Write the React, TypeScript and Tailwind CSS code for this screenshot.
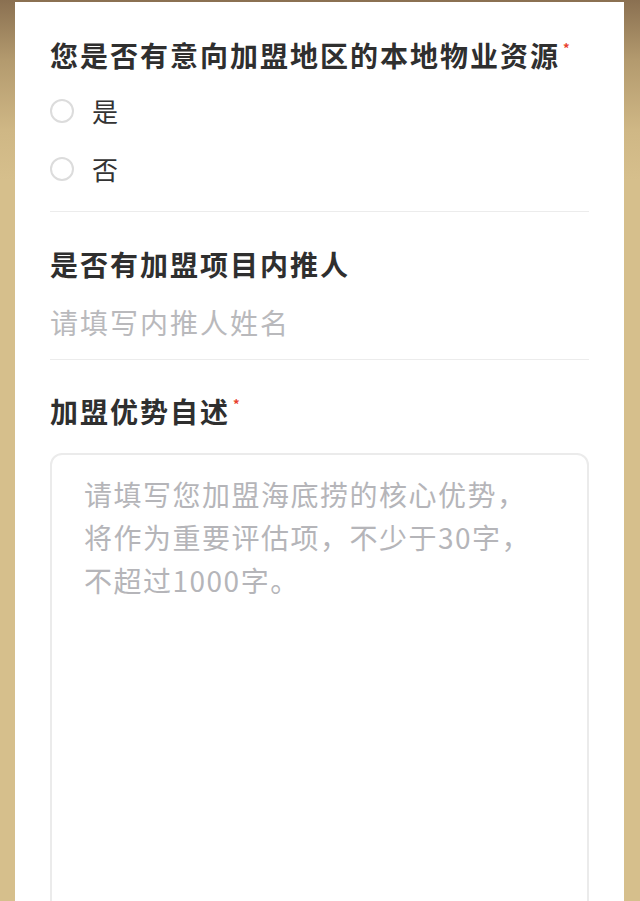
import React, { useState } from 'react';

const font = { fontFamily: '"Noto Sans CJK SC", "Noto Sans", sans-serif' };

const Required = () => (
  <span className="ml-[3px] inline-block align-top text-[13px] leading-[13px] text-[#e8412c] translate-y-[6px]">*</span>
);

const Radio: React.FC<{ label: string; checked: boolean; onClick: () => void }> = ({ label, checked, onClick }) => (
  <button onClick={onClick} className="flex h-[58px] items-center gap-[18px] text-left">
    <span className="flex h-[24px] w-[24px] items-center justify-center rounded-full border-2 border-[#dcdcdc] bg-white">
      {checked && <span className="h-[12px] w-[12px] rounded-full bg-[#c9a96b]" />}
    </span>
    <span className="text-[26px] leading-[40px] text-[#333333]">{label}</span>
  </button>
);

export default function App() {
  const [choice, setChoice] = useState<string | null>(null);

  return (
    <div
      style={font}
      className="min-h-screen bg-[linear-gradient(to_bottom,#8a7051_0px,#b39a6e_60px,#cfb785_130px,#d6bf8c_180px,#d6bf8c_100%)] px-[15px] pt-[2px] pr-[16px]"
    >
      <div className="min-h-[899px] bg-white px-[35px] pt-[33px]">
        {/* 物业资源 */}
        <div className="text-[28px] font-bold leading-[40px] tracking-[2px] text-[#2f2f2f]">
          您是否有意向加盟地区的本地物业资源<Required />
        </div>
        <div className="mt-[7px] flex flex-col">
          <Radio label="是" checked={choice === 'yes'} onClick={() => setChoice('yes')} />
          <Radio label="否" checked={choice === 'no'} onClick={() => setChoice('no')} />
        </div>
        <div className="mt-[13px] h-px bg-[#ececec]" />

        {/* 内推人 */}
        <div className="pt-[32px] text-[28px] font-bold leading-[40px] tracking-[2px] text-[#2f2f2f]">
          是否有加盟项目内推人
        </div>
        <input
          style={font}
          placeholder="请填写内推人姓名"
          className="mt-[18px] block h-[40px] w-full bg-transparent text-[28px] tracking-[2px] text-[#333] outline-none placeholder:text-[#b9b9bc]"
        />
        <div className="mt-[17px] h-px bg-[#ececec]" />

        {/* 优势自述 */}
        <div className="pt-[31px] text-[28px] font-bold leading-[40px] tracking-[2px] text-[#2f2f2f]">
          加盟优势自述<Required />
        </div>
        <textarea
          style={font}
          placeholder={'请填写您加盟海底捞的核心优势，\n将作为重要评估项，不少于30字，\n不超过1000字。'}
          className="mt-[22px] block h-[520px] w-full resize-none rounded-[12px] border-2 border-[#ebebeb] px-[32px] pt-[18px] text-[28px] leading-[43px] tracking-[1.5px] text-[#333] outline-none placeholder:text-[#b5b5b9]"
        />
      </div>
    </div>
  );
}
